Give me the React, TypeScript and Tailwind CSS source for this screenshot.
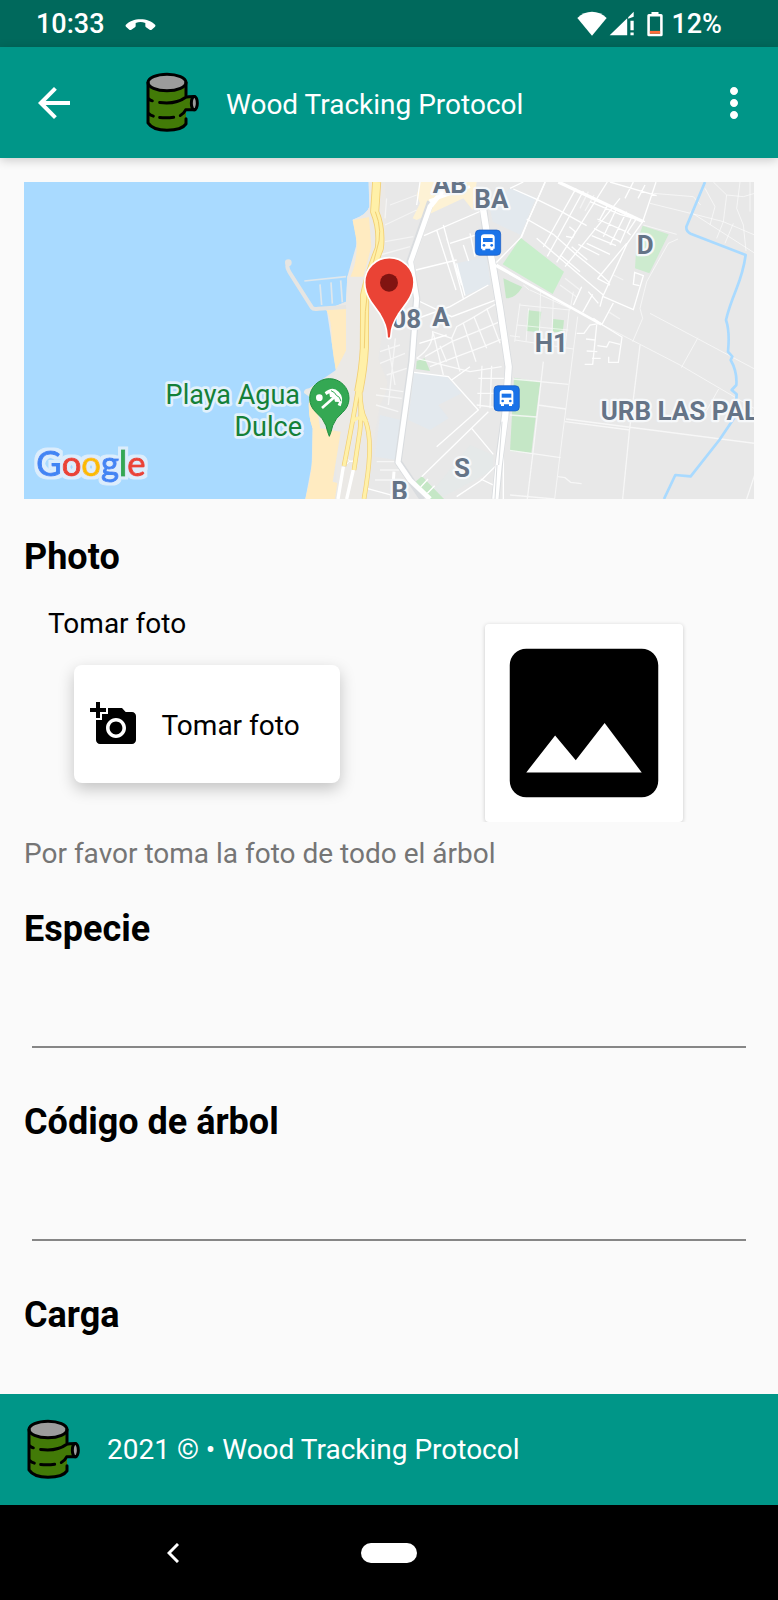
import { useState } from "react";
import { MdAddAPhoto, MdArrowBack, MdImage, MdMoreVert } from "react-icons/md";

function LogIcon() {
  return (
    <svg viewBox="45 38 165 185" className="h-[62px] w-[55px] shrink-0" aria-hidden="true">
      <path d="M54 66V192Q66 212 111 212Q156 212 168 192V151H186V111H168V66Z" fill="#427a07" />
      <ellipse cx="111" cy="68" rx="57" ry="25" fill="#9c9c9c" />
      <path d="M182 112H194V150H182Z" fill="#427a07" />
      <ellipse cx="193" cy="131" rx="9" ry="19" fill="#9c9c9c" />
      <g fill="none" stroke="#000" strokeWidth="9" strokeLinecap="round" strokeLinejoin="round">
        <ellipse cx="111" cy="69" rx="57" ry="25" />
        <path d="M54 69V190Q68 212 111 212Q156 212 168 193V178" />
        <path d="M168 69V108" />
        <path d="M56 118Q60 122 67 124M89 129Q138 135 166 114Q172 111 194 111" />
        <path d="M56 162Q60 167 70 170M89 174Q112 176 131 173M151 168Q161 163 167 151H194" />
        <ellipse cx="193" cy="131" rx="9" ry="20" />
      </g>
    </svg>
  );
}

function StatusBar() {
  return (
    <div className="flex h-[47px] items-center bg-[#00695c] pl-9 pr-14 text-[27px] font-medium leading-9 text-white">
      <span>10:33</span>
      <svg viewBox="376 48 93 42" className="ml-5 h-[14px] w-[31px]" fill="#fff" aria-hidden="true">
        <path d="M378 72C398 49 447 49 467 72Q468 75 466 77L456 86Q453 88 450 86L439 79Q437 77 437 74V66C427 62 418 62 408 66V74Q408 77 406 79L395 86Q392 88 389 86L379 77Q377 75 378 72Z" />
      </svg>
      <div className="ml-auto flex items-center">
        <svg viewBox="564 32 90 75" className="h-[25px] w-[30px]" fill="#fff" aria-hidden="true">
          <path d="M565 53C590 28 628 28 653 53L609 106Z" />
        </svg>
        <svg viewBox="660 32 78 77" className="ml-[2px] h-[25px] w-[26px]" fill="#fff" aria-hidden="true">
          <path d="M661 107L715 54V107ZM718 51L735 34V50L718 56Z" />
          <path d="M725 62H735V91H725ZM725 98H735V107H725Z" />
        </svg>
        <svg viewBox="777 32 50 79" className="ml-3 h-[26px] w-4" aria-hidden="true">
          <path d="M791 34H813V40H821Q826 40 826 45V105Q826 110 821 110H783Q778 110 778 105V45Q778 40 783 40H791ZM786 48V102H818V48Z" fill="#fff" fillRule="evenodd" />
          <path d="M786 93H818V102H786Z" fill="#ff6d3a" />
        </svg>
        <span className="ml-2">12%</span>
      </div>
    </div>
  );
}

function BusStop({ x, y }: { x: number; y: number }) {
  return (
    <g transform={`translate(${x} ${y})`}>
      <rect width="76" height="76" rx="12" fill="#1a73e8" stroke="#1558c0" strokeWidth="2" />
      <path d="M17 22Q17 13 27 13H48Q58 13 58 22V56H54V61H45V56H30V61H21V56H17Z" fill="#fff" />
      <path d="M23 24H52V36H23Z" fill="#1a73e8" />
      <circle cx="26" cy="46" r="4" fill="#1a73e8" />
      <circle cx="49" cy="46" r="4" fill="#1a73e8" />
    </g>
  );
}

const districts = [
  { name: "AB", x: 488, y: 53 },
  { name: "BA", x: 613, y: 98 },
  { name: "08", x: 364, y: 458 },
  { name: "A", x: 487, y: 453 },
  { name: "S", x: 552, y: 907 },
  { name: "B", x: 364, y: 975 },
  { name: "D", x: 1100, y: 238 },
  { name: "H1", x: 794, y: 530 },
  { name: "URB LAS PAL", x: 992, y: 735 },
];

function MapView() {
  return (
    <svg viewBox="-738 21 2190 951" className="block h-auto w-full" role="img" aria-label="Mapa">
      <defs>
        <filter id="halo" x="-10%" y="-10%" width="120%" height="120%">
          <feMorphology in="SourceAlpha" operator="dilate" radius="9" result="grown" />
          <feFlood floodColor="#dcedfc" />
          <feComposite in2="grown" operator="in" />
          <feMerge>
            <feMergeNode />
            <feMergeNode in="SourceGraphic" />
          </feMerge>
        </filter>
      </defs>
      <rect x="-738" y="21" width="2190" height="951" fill="#a9daff" />

      {/* land */}
      <path d="M296 21L298 95Q292 118 248 134Q262 170 258 230Q258 270 232 305L228 380L170 404L185 440L198 585L118 640L128 760L125 870L106 972H1452V21Z" fill="#e8e8e8" />
      <path d="M296 21L298 95Q292 118 248 134L262 200L232 305L228 380L170 404L198 585L180 640L200 760V972H280L330 690Q352 650 352 620L325 550L336 480L322 300L350 150L345 21Z" fill="#ebe9e6" />
      <path d="M248 136L297 126L304 215L280 305H241Q262 262 260 200Z" fill="#ffebc1" />
      <path d="M168 404L228 400V528L198 588Q190 545 185 500Q186 430 168 404Z" fill="#ffebc1" />
      <path d="M104 648L135 655L150 760L212 770L188 920L202 924L195 972H106Q130 880 127 820L128 760Q112 720 118 665Z" fill="#ffebc1" />
      <path d="M198 585Q192 615 180 625L118 640Q100 642 102 654L118 665L128 760L240 700L228 528Z" fill="#ebe9e6" />
      <path d="M118 660L135 655L150 760H128Q112 720 118 660Z" fill="#ffebc1" />
      <path d="M58 262Q46 272 58 291L126 398Q130 404 145 401L228 396" fill="none" stroke="#e6e5e2" strokeWidth="12" />
      <circle cx="55" cy="263" r="10" fill="#e6e5e2" />
      <path d="M103 318L228 305M150 328L155 390M183 322L187 386M212 316L217 382" fill="none" stroke="#dfe7ec" strokeWidth="5" />
      <path d="M452 21H620L608 105L580 70L440 135L428 130L450 85L440 60Z" fill="#fdf2d5" />

      {/* blocks */}
      <g fill="#e3e9ee">
        <path d="M660 100L720 40L798 68L752 180L668 140Z" />
        <path d="M560 265L650 245L662 328L585 362Z" />
        <path d="M432 592L530 604L575 655L505 690L536 730L480 765L415 735Z" />
        <path d="M330 720L392 735L380 855L315 845Z" />
        <path d="M490 945L600 810L670 840V885L520 965Z" fill="#e5e9e9" />
      </g>

      {/* parks */}
      <g fill="#c5e7c6">
        <path d="M752 188L882 290L848 357L698 268Z" fill="#c8eecb" />
        <path d="M700 310L757 336Q735 372 708 370Z" />
        <path d="M440 558L464 550L480 588L438 582Z" />
        <path d="M436 920L456 904L522 972H480Z" />
        <path d="M1118 152L1196 178L1138 295L1095 280L1100 200Z" fill="#cdebcf" />
        <path d="M775 406L814 410L806 472L770 468Z" />
        <path d="M850 432L882 436L878 474L848 470Z" />
        <path d="M732 608L811 621L797 726L784 834L720 828Z" />
      </g>

      {/* minor streets */}
      <g fill="none" stroke="#fff" strokeWidth="4">
        <path d="M462 182L640 105M520 150L580 370M500 165L558 345M540 205L618 180M438 285L560 255M440 375L545 425L690 370M430 435L540 395L655 330M448 505L530 480M580 210L596 258M560 265L585 362M530 190L575 330M600 175L615 245" />
        <path d="M350 70L345 130M360 90L440 60M345 150L440 105M345 200L430 185M330 240L420 215" opacity=".5" />
        <path d="M330 530L390 510M330 565L405 535M350 600L410 580M330 640L400 650M318 660L395 670M318 690L385 710M355 510L375 630M376 490L355 690M320 860H390M330 885H388M315 915H385" opacity=".6" />
        <path d="M440 550Q490 515 488 470L545 490L560 455L605 430L655 400L690 380M490 475L520 600M440 550L600 590L695 575M510 512L530 560M545 490L570 590M580 445L618 560M612 425L650 520M650 400L690 505M465 545L545 500L620 470L690 440M480 575L560 545L640 515L700 490M636 572L630 700M665 572L660 700M625 610H710M622 655H712M620 690L712 702" opacity=".8" />
        <path d="M432 592L535 605L625 705L500 815M655 710L455 905M605 760L670 838M545 615L600 575M680 870L635 915L560 965M632 912L680 935M700 740V972M290 940L370 962" />
        <path d="M450 21L440 90M720 40L760 21M672 270L752 188L825 21M680 268L750 310M452 936L474 912M472 955L494 932" />
      </g>

      {/* north east grid */}
      <g transform="translate(720 0)" fill="none" stroke="#fff" strokeWidth="4">
        <path d="M10 42L82 74L148 106L230 152M106 21L55 135L34 188M198 40L100 216M220 48L112 244M292 21L140 262M330 70L165 275M50 132L130 178L200 240L268 295L300 325M80 190L150 250L215 305L280 360" />
        <path d="M240 80L330 118L405 140M252 160L330 200M262 132L348 170M245 182L318 212M230 205L300 238M178 155L196 170L188 188L168 184M438 21L420 75L398 140L352 205L278 365L270 395M350 205L262 312M205 208L268 240M370 21L345 70M405 30L384 70M292 92L266 140M320 100L280 185M350 110L300 210M368 120L330 205M380 130L352 172L362 180M300 21L440 62M185 215L232 255M150 240L210 290M215 335L190 390M248 358L218 412M262 310L300 330M235 350L265 385M280 365L370 404L400 302L374 292L370 328L388 332M310 384L276 448L250 430" />
        <path d="M200 475H222L240 450L270 445L336 486L325 562H296V545M260 450L248 568H224M228 492L255 495M230 528L262 530M246 550H272M262 512L290 516L298 500L330 508" opacity=".9" />
        <path d="M210 100L235 50M225 108L252 60M150 330L200 366M165 310L210 345M310 300L340 315M298 412L330 432" opacity=".5" />
      </g>
      <g transform="translate(720 0)" fill="none" stroke="#fff" strokeWidth="3" opacity=".6">
        <path d="M430 55L550 65L572 90M420 85L570 122L640 140L734 180M585 40L615 95L600 150M540 110L735 235M610 21L650 60L700 65L734 55M650 60L640 140L620 190M690 21L680 100L700 150L708 228M720 21V110M670 145L645 205M400 150L500 178M504 192L475 205L410 320L390 400L398 430L368 500M420 415L734 582M564 488L514 578M626 642L585 715" />
        <path d="M28 390L180 405L190 350M60 345L180 400M15 495L190 522M30 385L14 500M56 400L48 500M92 345L88 480M130 370L125 500M178 400L165 520M20 450L175 465M0 482L30 486M203 425L150 840L134 972M40 330L58 345" />
      </g>
      <g transform="translate(720 0)" fill="none" stroke="#fafafa" strokeWidth="4" opacity=".8">
        <path d="M100 560L68 840L52 972M10 612L175 628M84 690L168 702M0 720L80 726M0 826L152 848M168 732L734 805M165 740L360 765M390 510L358 770L338 972M144 905L165 908L182 922L215 926M0 960L134 972M734 900L710 972" />
      </g>

      {/* main roads */}
      <g fill="none" stroke="#d9dcdf" strokeLinejoin="round">
        <path d="M482 80L420 260L440 370L425 560L384 860L460 972" strokeWidth="22" />
        <path d="M640 100L652 200L668 270L690 400L716 575L708 700L692 820L676 972" strokeWidth="24" />
      </g>
      <g fill="none" stroke="#fff" strokeLinejoin="round">
        <path d="M540 21L480 95L422 260L440 370L426 560L384 862L420 915L480 972" strokeWidth="15" />
        <path d="M478 78L600 35M372 890L366 972" strokeWidth="9" />
        <path d="M638 95L650 170L668 270L690 400L716 575L706 720L686 870L676 972" strokeWidth="19" />
        <path d="M664 265L710 290L994 448" strokeWidth="8" />
        <path d="M994 448L1230 570L1452 700" strokeWidth="3" opacity=".6" />
        <path d="M865 21L1120 140" strokeWidth="10" />
        <path d="M220 875L204 972M251 880L230 972" strokeWidth="10" />
        <path d="M230 848Q242 870 256 850M230 868Q242 848 256 868" strokeWidth="3" />
      </g>
      <path d="M681 870L675 972M696 740L686 870" stroke="#d9dcdf" strokeWidth="3" fill="none" />

      {/* coastal highway */}
      <g fill="none" strokeLinejoin="round">
        <path d="M320 21L314 110Q335 160 328 220Q296 300 284 360L283 520Q280 580 266 650" stroke="#f2cf74" strokeWidth="27" />
        <path d="M264 645Q250 730 222 873M270 645Q276 740 267 785L252 885M270 650Q272 710 286 735Q302 780 298 845Q296 890 282 972" stroke="#f2cf74" strokeWidth="14" />
        <path d="M320 21L314 110Q335 160 328 220Q296 300 284 360L283 520Q280 580 266 650" stroke="#fff0a8" strokeWidth="22" />
        <path d="M264 645Q250 730 222 873M270 645Q276 740 267 785L252 885M270 650Q272 710 286 735Q302 780 298 845Q296 890 282 972M250 738Q268 718 290 740" stroke="#fff0a8" strokeWidth="10" />
        <path d="M316 110Q340 170 320 225Q295 310 286 410L283 520" stroke="#f2cf74" strokeWidth="3" />
      </g>

      {/* canal */}
      <path d="M1305 21L1249 155Q1248 170 1262 176L1427 240Q1420 290 1398 345Q1376 400 1368 435Q1380 470 1374 530L1387 545L1382 555Q1402 590 1399 630L1385 645L1400 658L1395 725L1348 795L1262 904L1216 900L1182 972" fill="none" stroke="#a9daff" strokeWidth="8" strokeLinejoin="round" />

      <g fontFamily="Roboto, sans-serif" strokeLinejoin="round" style={{ paintOrder: "stroke" }}>
        <g fontSize="78" fontWeight="700" fill="#657487" stroke="#f6f8fa" strokeWidth="14">
          {districts.map((d) => (
            <text key={d.name} x={d.x} y={d.y}>{d.name}</text>
          ))}
        </g>
        <g fontSize="81" fill="#148038" stroke="#e2f1fc" strokeWidth="16" textAnchor="end">
          <text x="90" y="686">Playa Agua</text>
          <text x="96" y="783">Dulce</text>
        </g>
      </g>

      <BusStop x={616} y={165} />
      <BusStop x={672} y={632} />

      {/* beach marker */}
      <path d="M178 784Q172 770 168 752Q160 730 139 713Q119 695 119 670A59 59 0 0 1 237 670Q237 695 217 713Q196 730 188 752Q184 770 178 784Z" fill="#34a853" stroke="#1e8e3e" strokeWidth="3" />
      <circle cx="148" cy="668" r="10" fill="#fff" />
      <path d="M164 652Q188 632 206 650Q224 668 212 694L203 690L207 681L195 680L192 668L180 666L178 655L169 660Z" fill="#fff" />
      <path d="M196 664L156 699" stroke="#fff" strokeWidth="8" fill="none" />
      <path d="M183 647Q196 652 199 661Q210 664 213 679" stroke="#34a853" strokeWidth="3" fill="none" />

      {/* selected position */}
      <path d="M357 491Q350 491 351 480Q350 450 330 418L303 380Q284 352 284 322A74 74 0 0 1 432 322Q432 352 412 380L385 418Q364 450 363 480Q363 491 357 491Z" fill="#ea4335" stroke="#fff" strokeWidth="5" />
      <circle cx="357" cy="323" r="27" fill="#811411" />

      <text x="-701" y="902" fontFamily="Lato, sans-serif" fontSize="104" strokeWidth="3" filter="url(#halo)">
        <tspan fill="#4285f4" stroke="#4285f4">G</tspan>
        <tspan fill="#ea4335" stroke="#ea4335">o</tspan>
        <tspan fill="#fbbc05" stroke="#fbbc05">o</tspan>
        <tspan fill="#4285f4" stroke="#4285f4">g</tspan>
        <tspan fill="#34a853" stroke="#34a853">l</tspan>
        <tspan fill="#ea4335" stroke="#ea4335">e</tspan>
      </text>
    </svg>
  );
}

interface FieldProps {
  id: string;
  label: string;
}

function Field({ id, label }: FieldProps) {
  const [value, setValue] = useState("");

  return (
    <div className="mb-[50px]">
      <label htmlFor={id} className="block text-4xl font-bold leading-[48px]">{label}</label>
      <div className="px-2">
        <input
          id={id}
          value={value}
          onChange={(e) => setValue(e.target.value)}
          className="block h-[95px] w-full border-b-2 border-[#868686] bg-transparent pt-8 text-[28px] outline-none"
        />
      </div>
    </div>
  );
}

export default function App() {
  return (
    <div className="flex min-h-screen flex-col bg-[#fafafa] font-[Roboto,sans-serif] text-black">
      <StatusBar />

      <header className="flex h-[111px] items-center bg-[#009688] pl-[30px] pr-5 text-white shadow-[0_2px_10px_rgba(0,0,0,0.2)]">
        <button type="button" aria-label="Volver">
          <MdArrowBack className="size-12" />
        </button>
        <div className="ml-[67px]">
          <LogIcon />
        </div>
        <h1 className="ml-[26px] pt-1 text-[28px] leading-9">Wood Tracking Protocol</h1>
        <button type="button" aria-label="Más opciones" className="ml-auto">
          <MdMoreVert className="size-12" />
        </button>
      </header>

      <main className="flex-1 px-6 pt-6">
        <MapView />

        <h2 className="mt-[34px] text-4xl font-bold leading-[48px]">Photo</h2>
        <div className="-mr-6 mt-[25px] grid grid-cols-[365fr_389fr]">
          <div>
            <p className="pl-6 text-[28px] leading-9">Tomar foto</p>
            <button
              type="button"
              className="mx-auto mt-[23px] flex h-[118px] w-[266px] items-center rounded-lg bg-white pl-4 text-[28px] leading-9 shadow-[0_6px_16px_rgba(0,0,0,0.22)]"
            >
              <MdAddAPhoto className="size-12" />
              <span className="ml-6 pt-1">Tomar foto</span>
            </button>
          </div>
          <div className="flex justify-center overflow-hidden pt-[18px]">
            <div className="size-[198px] rounded bg-white shadow-[0_1px_4px_rgba(0,0,0,0.2)]">
              <MdImage className="size-full" />
            </div>
          </div>
        </div>
        <p className="mt-[14px] text-[28px] leading-9 text-[#757575]">Por favor toma la foto de todo el árbol</p>

        <div className="mt-[33px]">
          <Field id="especie" label="Especie" />
          <Field id="codigo" label="Código de árbol" />
          <h2 className="text-4xl font-bold leading-[48px]">Carga</h2>
        </div>
      </main>

      <footer className="flex h-[111px] items-center bg-[#009688] pl-[26px] text-[28px] leading-9 text-white">
        <LogIcon />
        <p className="ml-[26px]">2021 © • Wood Tracking Protocol</p>
      </footer>

      <nav className="grid h-[95px] grid-cols-[1fr_auto_1fr] items-center bg-black">
        <button type="button" aria-label="Atrás" className="mr-4 justify-self-center">
          <svg viewBox="0 0 12 20" className="h-5 w-3" fill="none" stroke="#fff" strokeWidth="3">
            <path d="M11 1L2 10L11 19" />
          </svg>
        </button>
        <button type="button" aria-label="Inicio" className="h-5 w-14 rounded-full bg-white" />
      </nav>
    </div>
  );
}
